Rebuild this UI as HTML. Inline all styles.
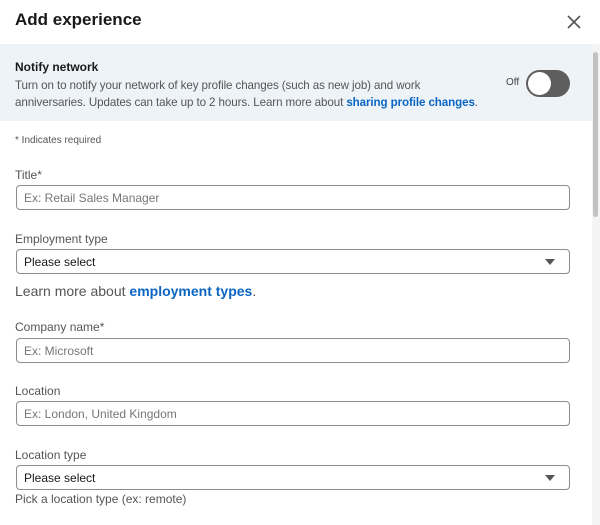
<!DOCTYPE html>
<html><head><style>
*{margin:0;padding:0;box-sizing:border-box}
body{width:600px;height:525px;overflow:hidden;background:#fff;font-family:"Liberation Sans",Arial,sans-serif;position:relative;color:#191919}
.a{position:absolute;white-space:nowrap}
.lbl{font-size:12px;color:#555}
.inp{position:absolute;left:16px;width:554px;height:25px;border:1px solid #8c8c8c;border-radius:4px;font-size:12px;color:#777;padding:5px 7px}
.sel{color:#191919}
.sel:after{content:"";position:absolute;right:14px;top:9px;border-left:5px solid transparent;border-right:5px solid transparent;border-top:6px solid #555}
.blue{color:#0a66c2;font-weight:bold}
</style></head><body>
<div class="a" style="left:15px;top:10px;font-size:17px;font-weight:bold;color:#191919">Add experience</div>
<svg class="a" style="left:566px;top:14px" width="16" height="16"><path d="M2 2L14 14M14 2L2 14" stroke="#555" stroke-width="1.6"/></svg>
<div class="a" style="left:0;top:44px;width:592px;height:77px;background:#eef3f8"></div>
<div class="a" style="left:15px;top:60px;font-size:12px;font-weight:bold">Notify network</div>
<div class="a" style="left:15px;top:77px;font-size:11.6px;letter-spacing:-0.1px;color:#555;line-height:17px">Turn on to notify your network of key profile changes (such as new job) and work<br>anniversaries. Updates can take up to 2 hours. Learn more about <span class="blue" style="font-weight:bold">sharing profile changes</span>.</div>
<div class="a" style="left:506px;top:77px;font-size:10px;color:#444">Off</div>
<div class="a" style="left:526px;top:70px;width:44px;height:27px;border-radius:14px;background:#5e5e5e"></div>
<div class="a" style="left:528px;top:72px;width:23px;height:23px;border-radius:50%;background:#fff"></div>
<div class="a" style="left:15px;top:135px;font-size:10px;color:#555">* Indicates required</div>
<div class="a lbl" style="left:15px;top:168px">Title*</div>
<div class="inp" style="top:185px">Ex: Retail Sales Manager</div>
<div class="a lbl" style="left:15px;top:232px">Employment type</div>
<div class="inp sel" style="top:249px">Please select</div>
<div class="a" style="left:15px;top:283px;font-size:14px;color:#555">Learn more about <span class="blue">employment types</span>.</div>
<div class="a lbl" style="left:15px;top:320px">Company name*</div>
<div class="inp" style="top:338px">Ex: Microsoft</div>
<div class="a lbl" style="left:15px;top:384px">Location</div>
<div class="inp" style="top:401px">Ex: London, United Kingdom</div>
<div class="a lbl" style="left:15px;top:448px">Location type</div>
<div class="inp sel" style="top:465px">Please select</div>
<div class="a lbl" style="left:15px;top:492px">Pick a location type (ex: remote)</div>
<div class="a" style="left:592px;top:44px;width:8px;height:481px;background:#f4f4f4"></div>
<div class="a" style="left:593px;top:52px;width:5px;height:165px;border-radius:3px;background:#c2c2c2"></div>
</body></html>
